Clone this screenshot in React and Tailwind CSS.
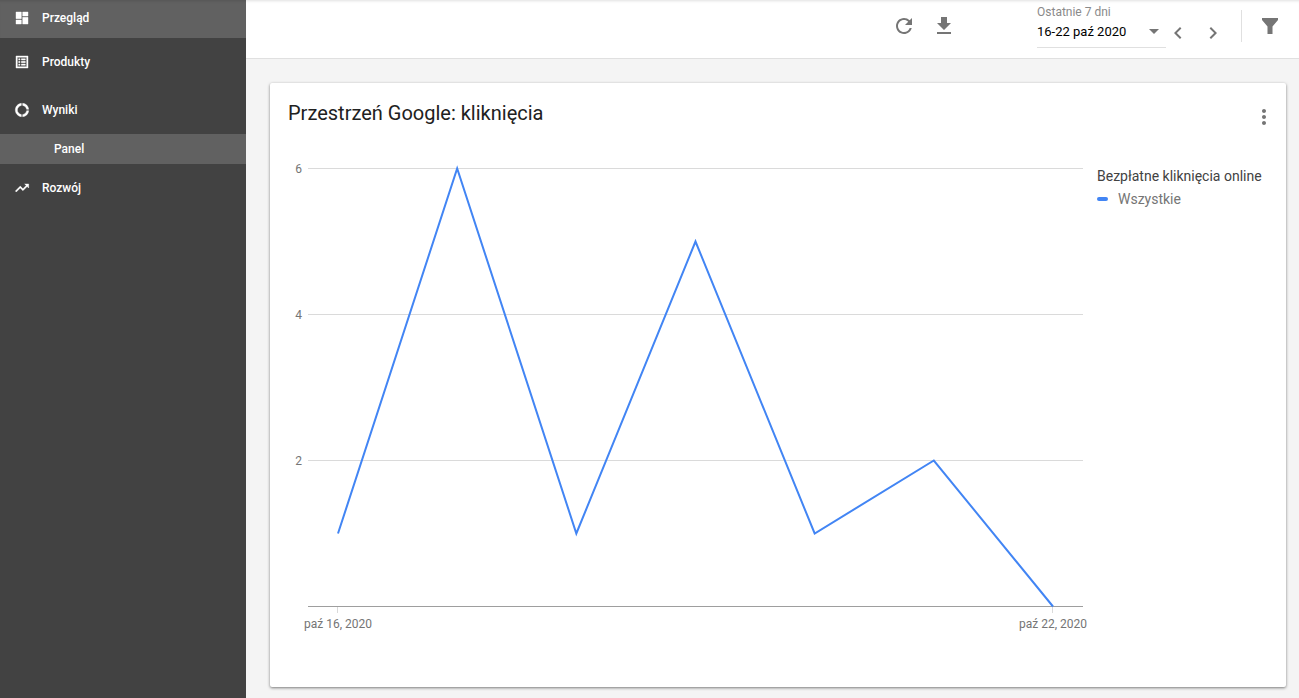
import React from "react";
import clsx from "clsx";
import {
    MdArrowDropDown,
    MdChevronLeft,
    MdChevronRight,
    MdGetApp,
    MdMoreVert,
    MdRefresh,
} from "react-icons/md";

// 24x24 glyphs, drawn with a thin outline so they stay solid at 16px
const NAV_ICONS = {
    overview: "M3 13h8V3H3v10zm0 8h8v-6H3v6zm10 0h8V11h-8v10zm0-18v6h8V3h-8z",
    products: "M19 5v14H5V5h14m2-2H3v18h18V3zM11 7h6v2h-6V7zm0 4h6v2h-6v-2zm0 4h6v2h-6v-2zM7 7h2v2H7V7zm0 4h2v2H7v-2zm0 4h2v2H7v-2z",
    performance: "M11 5.08V2c-5 .5-9 4.8-9 10s4 9.5 9 10v-3.08c-3-.48-6-3.4-6-6.92s3-6.44 6-6.92zM18.97 11H22c-.47-5-4-8.53-9-9v3.08C16 5.51 18.54 8 18.97 11zM13 18.92V22c5-.47 8.53-4 9-9h-3.03c-.43 3-2.97 5.49-5.97 5.92z",
    growth: "M16 6l2.29 2.29-4.88 4.88-4-4L2 16.59 3.41 18l6-6 4 4 6.3-6.29L22 12V6z",
};

const NAV_ITEMS = [
    { id: "overview", title: "Przegląd", className: "h-[38px] pb-[2px] bg-[#616161] shadow-[inset_0_3px_3px_-2px_rgba(0,0,0,0.12)]" },
    { id: "products", title: "Produkty", className: "h-12" },
    { id: "performance", title: "Wyniki", className: "h-12", children: [{ id: "dashboard", title: "Panel" }] },
    { id: "growth", title: "Rozwój", className: "h-12" },
];

const CLICKS = [1, 6, 1, 5, 1, 2, 0];
const GRID_VALUES = [6, 4, 2];

// Plot geometry, in viewBox units
const PLOT_LEFT = 20;
const PLOT_RIGHT = 795;
const FIRST_X = 50;
const LAST_X = 765;
const BASE_Y = 457.5;
const UNIT_Y = 73;

const getX = (index) => FIRST_X + (index * (LAST_X - FIRST_X)) / (CLICKS.length - 1);
const getY = (value) => BASE_Y - value * UNIT_Y;

function IconButton({ label, children })
{
    return(
        <button type="button" aria-label={label} className="block size-6 shrink-0 cursor-pointer text-[#757575]">
            {children}
        </button>
    )
}

function Sidebar()
{
    return(
        <nav className="w-[246px] shrink-0 bg-[#424242] text-xs font-medium text-white">
            <ul>
                {NAV_ITEMS.map((item) => (
                    <li key={item.id}>
                        <a href={`#${item.id}`} className={clsx("flex items-center gap-3 px-[14px]", item.className)}>
                            <svg width="16" height="16" viewBox="0 0 24 24" fill="currentColor" stroke="currentColor" strokeWidth="0.6">
                                <path d={NAV_ICONS[item.id]} />
                            </svg>
                            {item.title}
                        </a>
                        {item.children && (
                            <ul>
                                {item.children.map((child) => (
                                    <li key={child.id}>
                                        <a href={`#${child.id}`} className="flex h-[30px] items-center bg-[#616161] pl-[54px]">
                                            {child.title}
                                        </a>
                                    </li>
                                ))}
                            </ul>
                        )}
                    </li>
                ))}
            </ul>
        </nav>
    )
}

function Toolbar()
{
    return(
        <header className="flex h-[59px] items-start justify-end border-b border-[#e0e0e0] bg-white pr-[17px] shadow-[inset_0_3px_3px_-2px_rgba(0,0,0,0.12)]">
            <div className="mr-[81px] flex gap-4 pt-[14px]">
                <IconButton label="Odśwież"><MdRefresh size={24} /></IconButton>
                <IconButton label="Pobierz"><MdGetApp size={24} /></IconButton>
            </div>

            <div className="w-[129px] border-b border-[#e0e0e0] pt-[5px]">
                <label htmlFor="period" className="block text-xs leading-[14px] text-[#8a8a8a]">Ostatnie 7 dni</label>
                <div className="relative h-7">
                    <select id="period" className="h-6 w-full cursor-pointer appearance-none bg-transparent text-[13px] leading-6 text-black">
                        <option>16-22 paź 2020</option>
                    </select>
                    <MdArrowDropDown size={24} className="pointer-events-none absolute top-0 right-0 text-[#757575]" />
                </div>
            </div>

            <div className="flex gap-[11px] pt-[21px]">
                <IconButton label="Poprzedni okres"><MdChevronLeft size={24} /></IconButton>
                <IconButton label="Następny okres"><MdChevronRight size={24} /></IconButton>
            </div>

            <div className="mx-4 mt-[10px] h-8 w-px bg-[#e0e0e0]" />

            <div className="pt-[14px]">
                <IconButton label="Filtruj">
                    <svg width="24" height="24" viewBox="0 0 24 24" fill="currentColor">
                        <path d="M4 4h16v2l-5.5 6.5V20h-5v-7.5L4 6z" />
                    </svg>
                </IconButton>
            </div>
        </header>
    )
}

function ClicksChart()
{
    const points = CLICKS.map((value, index) => `${getX(index)},${getY(value)}`).join(" ");

    return(
        <svg viewBox="0 0 801 520" className="min-w-0 flex-1" role="img" aria-label="Bezpłatne kliknięcia online">
            {GRID_VALUES.map((value) => (
                <g key={value}>
                    <line x1={PLOT_LEFT} x2={PLOT_RIGHT} y1={getY(value)} y2={getY(value)} stroke="#dadada" />
                    <text x="14" y={getY(value) + 4.5} textAnchor="end" fontSize="12" fill="#757575">{value}</text>
                </g>
            ))}

            <line x1={PLOT_LEFT} x2={PLOT_RIGHT} y1={BASE_Y} y2={BASE_Y} stroke="#9e9e9e" />
            <path d={`M${FIRST_X - 0.5} 458v6M${LAST_X - 0.5} 458v6`} stroke="#dadada" />
            <polyline points={points} fill="none" stroke="#4285f4" strokeWidth="2" />

            <text x={FIRST_X} y="479" textAnchor="middle" fontSize="12" fill="#757575">paź 16, 2020</text>
            <text x={LAST_X} y="479" textAnchor="middle" fontSize="12" fill="#757575">paź 22, 2020</text>
        </svg>
    )
}

export default function App()
{
    return(
        <div className="flex min-h-screen bg-[#f4f4f4] font-['Roboto',sans-serif]">
            <Sidebar />

            <div className="min-w-0 flex-1">
                <Toolbar />

                <main className="pt-6 pr-[13px] pb-[11px] pl-6">
                    <section className="rounded-xs bg-white pt-4 pb-[18px] shadow-[0_1px_3px_rgba(0,0,0,0.5)]">
                        {/* Header */}
                        <div className="flex h-[30px] justify-between pr-[10px] pl-[18px]">
                            <h1 className="text-xl leading-7 text-[#212121]">Przestrzeń Google: kliknięcia</h1>
                            <div className="self-end">
                                <IconButton label="Więcej opcji"><MdMoreVert size={24} /></IconButton>
                            </div>
                        </div>

                        <div className="mt-5 flex items-start gap-2 px-[18px]">
                            <ClicksChart />

                            {/* Legend */}
                            <div className="w-[171px] shrink-0 pt-[17px] text-sm leading-5">
                                <h2 className="text-[#424242]">Bezpłatne kliknięcia online</h2>
                                <p className="mt-[3px] flex items-center gap-[10px] text-[#757575]">
                                    <span className="h-1 w-[11px] rounded-xs bg-[#4285f4]" />
                                    Wszystkie
                                </p>
                            </div>
                        </div>
                    </section>
                </main>
            </div>
        </div>
    )
}
